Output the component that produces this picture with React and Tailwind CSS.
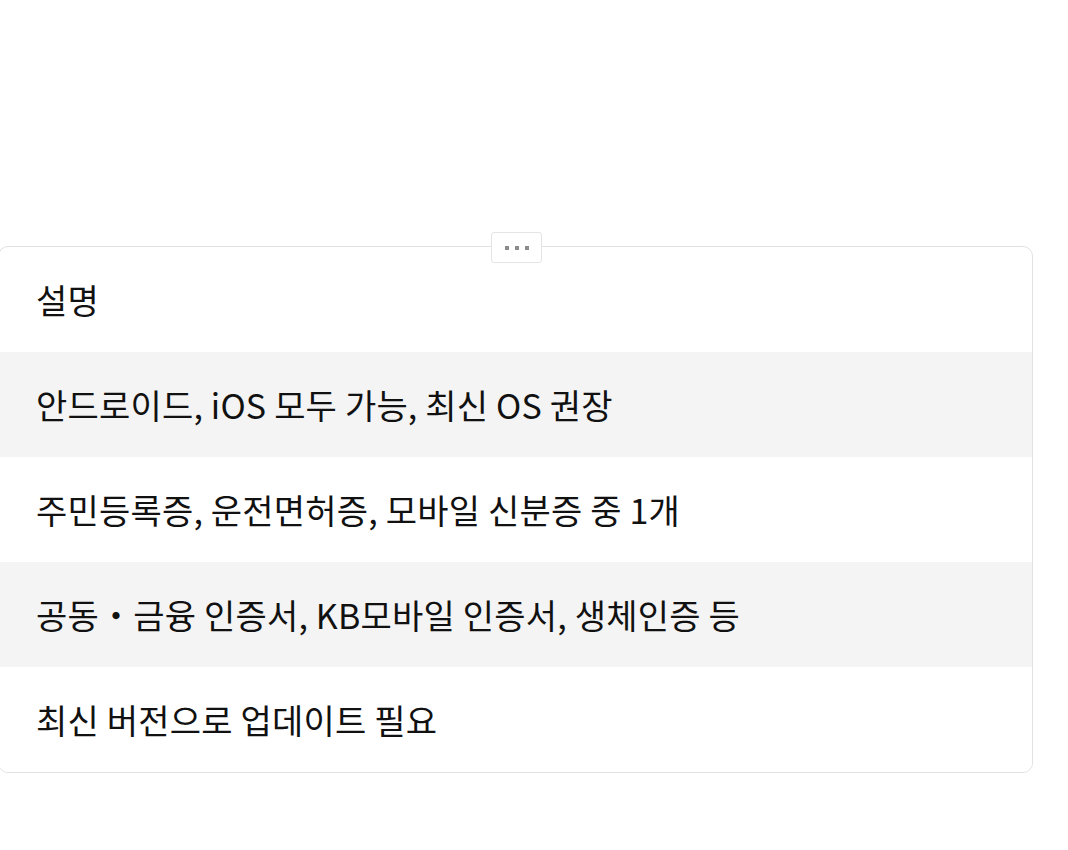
const rows = [
  '안드로이드, iOS 모두 가능, 최신 OS 권장',
  '주민등록증, 운전면허증, 모바일 신분증 중 1개',
  '공동・금융 인증서, KB모바일 인증서, 생체인증 등',
  '최신 버전으로 업데이트 필요',
];

export default function App() {
  return (
    <div
      className="w-[1068px] h-[850px] bg-white overflow-hidden pt-[246px]"
      style={{ fontFamily: '"Noto Sans CJK KR", "Noto Sans", sans-serif' }}
    >
      <div className="relative -ml-[2px] w-[1035px]">
        <div className="absolute left-[493px] -top-[14px] w-[51px] h-[31px] bg-white border border-[#e4e4e4] rounded-[3px] flex items-center justify-center gap-[6px] z-10">
          <span className="w-[4px] h-[4px] bg-[#8c8c8c]"></span>
          <span className="w-[4px] h-[4px] bg-[#8c8c8c]"></span>
          <span className="w-[4px] h-[4px] bg-[#8c8c8c]"></span>
        </div>
        <div className="border border-[#e2e2e2] rounded-[10px] overflow-hidden">
          <div className="h-[105px] flex items-center pl-[37px] text-[34px] tracking-[0.2px] text-[#111]">설명</div>
          {rows.map((text, i) => (
            <div
              key={i}
              className={`h-[105px] flex items-center pl-[37px] text-[34px] tracking-[0.2px] text-[#111] ${i % 2 === 0 ? 'bg-[#f4f4f4]' : 'bg-white'}`}
            >
              {text}
            </div>
          ))}
        </div>
      </div>
    </div>
  );
}
